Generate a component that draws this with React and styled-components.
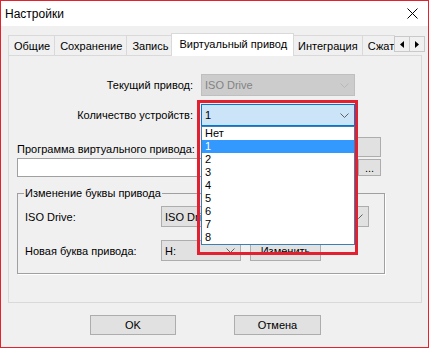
import React from 'react';
import styled, { createGlobalStyle, css } from 'styled-components';

const GlobalStyle = createGlobalStyle`
    html, body {
        margin: 0;
        padding: 0;
        background: #fff;
    }

    body {
        font-family: "Liberation Sans", Arial, sans-serif;
        font-size: 11px;
        color: #000;
    }

    * {
        box-sizing: border-box;
    }
`;

const Window = styled.div`
    width: 429px;
    height: 348px;
    border: 1px solid #e3222e;
    background: #f0f0f0;
    display: flex;
    flex-direction: column;
`;

const TitleBar = styled.div`
    height: 25px;
    background: #fff;
    display: flex;
    align-items: center;
    justify-content: space-between;
    padding: 0 10px 0 4px;
    font-size: 12px;
`;

const Body = styled.div`
    padding: 7px 3px 0 7px;
    display: flex;
    flex-direction: column;
`;

const TabStrip = styled.div`
    display: flex;
    height: 23px;
`;

const TabViewport = styled.div`
    flex: 1;
    display: flex;
    align-items: flex-start;
    padding-left: 1px;
    overflow: hidden;
`;

const Tab = styled.div`
    flex-shrink: 0;
    height: 20px;
    margin-top: 2px;
    margin-left: -1px;
    padding: 0 4px 0 5px;
    display: flex;
    align-items: center;
    white-space: nowrap;
    background: #f0f0f0;
    border: 1px solid #d9d9d9;
    border-bottom: none;

    ${(p) =>
        p.$active &&
        css`
            position: relative;
            z-index: 2;
            height: 23px;
            margin-top: 0;
            margin-left: -2px;
            margin-right: -1px;
            padding: 0 6px 2px 7px;
            background: #fff;
        `}
`;

const ScrollButtons = styled.div`
    display: flex;
    margin-top: 3px;
`;

const ScrollButton = styled.div`
    width: 16px;
    height: 16px;
    margin-left: -1px;
    display: flex;
    align-items: center;
    justify-content: center;
    background: #f0f0f0;
    border: 1px solid #c9c9c9;
`;

const Panel = styled.div`
    position: relative;
    z-index: 1;
    height: 248px;
    margin: -1px 0 0 0;
    width: 414px;
    border: 1px solid #d9d9d9;
    padding: 18px 0 0 8px;
`;

const FormGrid = styled.div`
    display: grid;
    grid-template-columns: 176px 154px;
    column-gap: 8px;
    row-gap: 8px;
    align-items: center;
`;

const Label = styled.div`
    text-align: ${(p) => (p.$right ? 'right' : 'left')};
    white-space: nowrap;
`;

const ProgramLabel = styled(Label)`
    padding-top: 4px;
`;

const Combo = styled.div`
    height: ${(p) => p.$h || 22}px;
    width: ${(p) => (p.$w ? `${p.$w}px` : 'auto')};
    display: flex;
    align-items: center;
    justify-content: space-between;
    padding: 0 5px 0 3px;
    background: #e1e1e1;
    border: 1px solid #adadad;
    white-space: nowrap;
    overflow: hidden;

    ${(p) =>
        p.$disabled &&
        css`
            background: #cccccc;
            border-color: #bfbfbf;
            color: #838383;
        `}

    ${(p) =>
        p.$open &&
        css`
            background: #cce4f7;
            border-color: #0078d7;
        `}
`;

const Highlight = styled.div`
    position: relative;
    z-index: 3;

    &::after {
        content: '';
        position: absolute;
        top: -4px;
        left: -4px;
        right: -3px;
        height: 149px;
        border: 3px solid #e3202f;
        pointer-events: none;
    }
`;

const DropList = styled.div`
    position: absolute;
    top: 100%;
    left: 0;
    right: 0;
    background: #fff;
    border: 1px solid #3c7fb1;
`;

const DropItem = styled.div`
    height: 13px;
    line-height: 13px;
    padding-left: 3px;
    background: ${(p) => (p.$selected ? '#3399ff' : '#fff')};
    color: ${(p) => (p.$selected ? '#fff' : '#000')};
`;

const ProgramRow = styled.div`
    margin-top: 11px;
    width: 364px;
    height: 20px;
    display: flex;
    align-items: center;
    justify-content: space-between;
`;

const BrowseRow = styled.div`
    margin-top: 1px;
    width: 364px;
    display: flex;
    align-items: center;
    gap: 5px;
`;

const TextInput = styled.div`
    flex: 1;
    height: 19px;
    background: #fff;
    border: 1px solid #a0a0a0;
`;

const Button = styled.div`
    width: ${(p) => p.$w}px;
    height: ${(p) => p.$h || 20}px;
    display: flex;
    align-items: center;
    justify-content: center;
    background: #e1e1e1;
    border: 1px solid #adadad;
    white-space: nowrap;
`;

const Group = styled.fieldset`
    margin: 10px 0 0 0;
    width: 368px;
    padding: 6px 14px 12px 7px;
    border: 1px solid #a0a0a0;
    box-shadow: 1px 1px 0 #fff;
`;

const Legend = styled.legend`
    padding: 0 1px;
    margin-left: -1px;
    line-height: 13px;
`;

const GroupGrid = styled.div`
    display: grid;
    grid-template-columns: 136px 1fr;
    row-gap: 13px;
    align-items: center;
`;

const InlineRow = styled.div`
    display: flex;
    align-items: center;
    gap: 9px;
`;

const Footer = styled.div`
    margin-top: 12px;
    padding-left: 82px;
    display: flex;
    gap: 58px;
`;

const Chevron = ({ color = '#606060' }) => (
    <svg width="9" height="5" viewBox="0 0 9 5">
        <polyline points="0.5,0.5 4.5,4.5 8.5,0.5" fill="none" stroke={color} strokeWidth="1" />
    </svg>
);

const CloseIcon = () => (
    <svg width="11" height="11" viewBox="0 0 11 11">
        <path d="M0.5 0.5 L10.5 10.5 M10.5 0.5 L0.5 10.5" stroke="#000" strokeWidth="1" />
    </svg>
);

const Arrow = ({ left }) => (
    <svg width="4" height="7" viewBox="0 0 4 7">
        <polygon points={left ? '4,0 0,3.5 4,7' : '0,0 4,3.5 0,7'} fill="#000" />
    </svg>
);

const tabs = ['Общие', 'Сохранение', 'Запись', 'Виртуальный привод', 'Интеграция', 'Сжатие'];
const counts = ['Нет', '1', '2', '3', '4', '5', '6', '7', '8'];

const App = () => {
    return (
        <>
            <GlobalStyle />
            <Window>
                <TitleBar>
                    <span>Настройки</span>
                    <CloseIcon />
                </TitleBar>
                <Body>
                    <TabStrip>
                        <TabViewport>
                            {tabs.map((t) => (
                                <Tab key={t} $active={t === 'Виртуальный привод'}>
                                    {t}
                                </Tab>
                            ))}
                        </TabViewport>
                        <ScrollButtons>
                            <ScrollButton>
                                <Arrow left />
                            </ScrollButton>
                            <ScrollButton>
                                <Arrow />
                            </ScrollButton>
                        </ScrollButtons>
                    </TabStrip>
                    <Panel>
                        <FormGrid>
                            <Label $right>Текущий привод:</Label>
                            <Combo $disabled>
                                <span>ISO Drive</span>
                                <Chevron color="#b8b8b8" />
                            </Combo>
                            <Label $right>Количество устройств:</Label>
                            <Highlight>
                                <Combo $open>
                                    <span>1</span>
                                    <Chevron />
                                </Combo>
                                <DropList>
                                    {counts.map((c) => (
                                        <DropItem key={c} $selected={c === '1'}>
                                            {c}
                                        </DropItem>
                                    ))}
                                </DropList>
                            </Highlight>
                        </FormGrid>
                        <ProgramRow>
                            <ProgramLabel>Программа виртуального привода:</ProgramLabel>
                            <Button $w={91} />
                        </ProgramRow>
                        <BrowseRow>
                            <TextInput />
                            <Button $w={23} $h={17}>
                                ...
                            </Button>
                        </BrowseRow>
                        <Group>
                            <Legend>Изменение буквы привода</Legend>
                            <GroupGrid>
                                <Label>ISO Drive:</Label>
                                <Combo $w={208} $h={21}>
                                    <span>ISO Drive</span>
                                    <Chevron />
                                </Combo>
                                <Label>Новая буква привода:</Label>
                                <InlineRow>
                                    <Combo $w={80} $h={21}>
                                        <span>H:</span>
                                        <Chevron />
                                    </Combo>
                                    <Button $w={71} $h={21}>
                                        Изменить
                                    </Button>
                                </InlineRow>
                            </GroupGrid>
                        </Group>
                    </Panel>
                    <Footer>
                        <Button $w={86}>OK</Button>
                        <Button $w={87}>Отмена</Button>
                    </Footer>
                </Body>
            </Window>
        </>
    );
};

export default App;
